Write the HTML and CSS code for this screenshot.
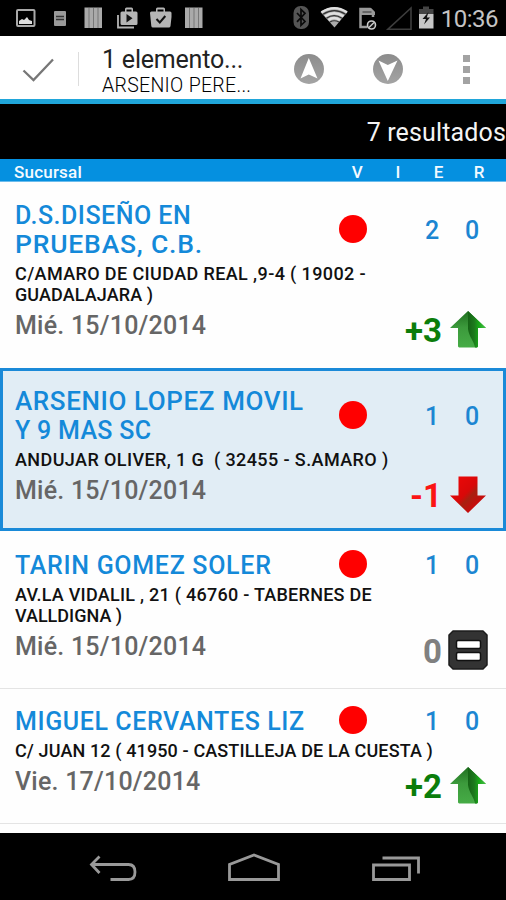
FILE: index.html
```html
<!DOCTYPE html>
<html lang="es">
<head>
<meta charset="utf-8">
<title>Sucursales</title>
<link rel="stylesheet" href="styles.css">
</head>
<body>
<svg class="defs" width="0" height="0" aria-hidden="true">
  <defs>
    <linearGradient id="gl" x1="0" y1="0" x2="0" y2="1"><stop offset="0" stop-color="#1f6f1f"/><stop offset=".45" stop-color="#3c9a3c"/><stop offset="1" stop-color="#46ac46"/></linearGradient>
    <linearGradient id="gr" x1="0" y1="0" x2="1" y2="0"><stop offset="0" stop-color="#156315"/><stop offset=".35" stop-color="#1c7a1c"/><stop offset=".6" stop-color="#18a818"/><stop offset="1" stop-color="#4cc04c"/></linearGradient>
    <linearGradient id="rd" x1="0" y1="0" x2="1" y2="1"><stop offset="0" stop-color="#f00808"/><stop offset=".45" stop-color="#d80808"/><stop offset=".56" stop-color="#a82010"/><stop offset=".75" stop-color="#c80c0c"/><stop offset="1" stop-color="#e00"/></linearGradient>
    <linearGradient id="gy" x1="0" y1="0" x2="0" y2="1"><stop offset="0" stop-color="#8c8c8c"/><stop offset="1" stop-color="#a4a4a4"/></linearGradient>
    <symbol id="arrow-up" viewBox="0 0 36 37"><path fill="url(#gl)" d="M18 0 L36 17 H28 V35.500 L27 36.500 H9 L8 35.500 V17 H0 Z"/><path fill="url(#gr)" d="M18 0 L36 17 H28 V35.500 L27 36.500 H25 C24 30 19 26 18 18 Z"/></symbol>
    <symbol id="arrow-down" viewBox="0 0 36 37"><path fill="url(#rd)" d="M8.500 .5h19v19H36L18 37 0 19.500h8.500z"/></symbol>
  </defs>
</svg>
<div class="status">
  <svg width="506" height="35" viewBox="0 0 506 35">
    <g fill="none" stroke="#a9a9a9" stroke-width="2"><rect x="17" y="10" width="17.500" height="16" rx="1"/></g>
    <path fill="#ddd" d="M19 24v-3l3-2 2 1 3-3 2 3 3 1v3z"/>
    <rect x="54" y="11" width="12" height="15" rx="1" fill="#999"/><path stroke="#333" stroke-width="1.300" d="M56 16.500h8M56 19.500h8"/>
    <g id="bars"><rect x="84.500" y="7.500" width="17.500" height="20.500" fill="#aaa"/><path stroke="#777" stroke-width="1" d="M89 8v20M93.500 8v20M98 8v20"/></g>
    <use href="#bars" x="100.500"/>
    <path fill="none" stroke="#b5b5b5" stroke-width="1.800" d="M118 15v12.500h16"/>
    <path fill="#b5b5b5" d="M120.500 13q0-1.500 1.500-1.500h3V9q0-1.500 1.500-1.500h5Q133 7.500 133 9v2.500h3q1.500 0 1.500 1.500v10.500q0 1.500-1.500 1.500h-14q-1.500 0-1.500-1.500z"/><path d="M126.500 9.500h5v2h-5z"/><path fill="#111" d="M126.500 14v8.500l6-4.200z"/>
    <path fill="#b5b5b5" d="M150 13q0-1.500 1.500-1.500h4.500V9q0-1.500 1.500-1.500h6Q165 7.500 165 9v2.500h5q1.500 0 1.500 1.500v4l-1 9q-.2 1.500-1.700 1.500H153q-1.500 0-1.700-1.500z"/><path d="M157.500 9.500h6v2h-6z"/><path fill="none" stroke="#111" stroke-width="2" d="m156.500 19 3.300 3.500 5.500-6.500"/>
    <rect x="293.500" y="6" width="15.500" height="23" rx="7" fill="#555"/><path fill="none" stroke="#0a0a0a" stroke-width="1.700" d="m297 13 8 8.500-4 3.800V9.500l4 3.800-8 8.500"/>
    <path fill="#aaa" d="M320.500 12q13.500-9.500 27 0L334.500 27.500z"/>
    <g fill="none" stroke="#e0e0e0" stroke-width="2.400"><path d="M321.500 12.300q13-8.300 25.500 0"/><path d="M325 16.300q9-6 18.500 0"/><path d="M328.500 20q5.500-4 11.500 0"/></g>
    <g fill="none" stroke="#333" stroke-width="1.200"><path d="M323 14.300q11.500-7.300 22.500 0"/><path d="M326.500 18.200q7.500-5 15.500 0"/><path d="M330 22q4-2.500 9 0"/></g>
    <path fill="none" stroke="#9a9a9a" stroke-width="2.500" d="M373 17v-5l-3-3h-9.500v18h7"/><path fill="#999" d="M360 8h11l4 4v3h-15z"/><path stroke="#333" d="M362.500 12h9"/>
    <circle cx="371.500" cy="25" r="4" fill="#111" stroke="#ccc" stroke-width="1.600"/><path stroke="#ccc" stroke-width="1.500" d="m369 27.500 5-5"/>
    <path fill="none" stroke="#3d3d3d" stroke-width="1.600" d="M388 29.200 411 8v21.200z"/>
    <path fill="#444" d="M423 6.500h6V9h4.500v5H419V9h4z"/><path fill="#c6c6c6" d="M419 14h14.500v14.500H419z"/><path fill="#111" d="m428.500 12-6 7h3.500l-2 5.500 6-7h-3.200z"/>
  </svg>
  <span class="clock">10:36</span>
</div>
<header class="bar">
  <svg class="check" width="32" height="24" viewBox="0 0 32 24"><path fill="none" stroke="#777" stroke-width="2.300" d="M1.500 12.500 11.500 22 31 1.500"/></svg>
  <i class="sep"></i>
  <div class="heads"><div class="h1">1 elemento...</div><div class="h2">ARSENIO PERE...</div></div>
  <svg class="nav1" width="30" height="30" viewBox="0 0 30 30"><circle cx="15" cy="15" r="15" fill="url(#gy)"/><path fill="#fff" d="M14.800 4 23.500 24.500 14.800 20.500 6.500 24.500z"/></svg>
  <svg class="nav2" width="30" height="30" viewBox="0 0 30 30"><circle cx="15" cy="15" r="15" fill="url(#gy)"/><path fill="#fff" d="M14.800 27 5.500 6.500 14.800 11 24.500 6.500z"/></svg>
  <div class="more"><i></i><i></i><i></i></div>
</header>
<div class="results">7 resultados</div>
<div class="cols"><span class="c0">Sucursal</span><span>V</span><span>I</span><span>E</span><span>R</span></div>
<main>
  <section class="row r1">
    <div class="top"><div class="name"><span class="t1">D.S.DISEÑO EN</span><br><span class="t2">PRUEBAS, C.B.</span></div><i class="dot"></i><b class="n e">2</b><b class="n">0</b></div>
    <div class="addr"><span class="a1">C/AMARO DE CIUDAD REAL ,9-4 ( 19002 -</span><br><span class="a2">GUADALAJARA )</span></div>
    <div class="foot"><span class="date">Mié. 15/10/2014</span><b class="diff up">+3</b><svg class="ar" width="36" height="37"><use href="#arrow-up"/></svg></div>
  </section>
  <section class="row r2 sel">
    <div class="top"><div class="name"><span class="t3">ARSENIO LOPEZ MOVIL</span><br><span class="t4">Y 9 MAS SC</span></div><i class="dot"></i><b class="n e">1</b><b class="n">0</b></div>
    <div class="addr"><span class="a3">ANDUJAR OLIVER, 1 G&nbsp; ( 32455 - S.AMARO )</span></div>
    <div class="foot"><span class="date">Mié. 15/10/2014</span><b class="diff down">-1</b><svg class="ar" width="36" height="37"><use href="#arrow-down"/></svg></div>
  </section>
  <section class="row r3">
    <div class="top"><div class="name"><span class="t5">TARIN GOMEZ SOLER</span></div><i class="dot"></i><b class="n e">1</b><b class="n">0</b></div>
    <div class="addr"><span class="a4">AV.LA VIDALIL , 21 ( 46760 - TABERNES DE</span><br><span class="a5">VALLDIGNA )</span></div>
    <div class="foot"><span class="date">Mié. 15/10/2014</span><b class="diff eq">0</b><svg class="ar eqi" width="40" height="40" viewBox="0 0 40 40"><path fill="#333" stroke="#1c1c1c" stroke-width="1.500" d="M5 1h30l4 4v30l-4 4H5l-4-4V5z" stroke-linejoin="round"/><g fill="#fff" stroke="#111" stroke-width="1.500"><rect x="8.500" y="10.500" width="24" height="8" rx="1.500"/><rect x="8.500" y="22.500" width="24" height="8" rx="1.500"/></g></svg></div>
  </section>
  <section class="row r4">
    <div class="top"><div class="name"><span class="t6">MIGUEL CERVANTES LIZ</span></div><i class="dot"></i><b class="n e">1</b><b class="n">0</b></div>
    <div class="addr"><span class="a6">C/ JUAN 12 ( 41950 - CASTILLEJA DE LA CUESTA )</span></div>
    <div class="foot"><span class="date">Vie. 17/10/2014</span><b class="diff up">+2</b><svg class="ar" width="36" height="37"><use href="#arrow-up"/></svg></div>
  </section>
</main>
<footer class="navbar">
  <svg width="506" height="67" viewBox="0 0 506 67"><g fill="none" stroke="#999" stroke-width="2.800">
    <path d="M99.500 23.500 91.500 31.500l8 8.500M92 31.500h36.500q6.500 0 6.500 7.500t-6.500 7.500H110.500"/>
    <path d="M229.500 46.500v-15L254 22l24.500 9.500v15z"/>
    <path d="M373.500 32h36v14.500h-36zM382.500 25h36v15.500"/>
  </g></svg>
</footer>
</body>
</html>
```
FILE: styles.css
```css
* { box-sizing: border-box; }
body { margin: 0; width: 506px; height: 900px; overflow: hidden; display: flex; flex-direction: column; background: #fefefe; font-family: Roboto, "Noto Sans", sans-serif; color: #111; }
i { font-style: normal; }
.defs { position: absolute; }
.status { height: 36px; background: #000; position: relative; flex: none; }
.status svg { display: block; }
.clock { position: absolute; right: 8px; top: 5px; font-size: 24px; line-height: 28px; color: #c4c4c4; letter-spacing: -.5px; }
.bar { height: 68px; flex: none; background: #fff; border-bottom: 5px solid #20a6da; display: flex; align-items: center; }
.check { margin: 4px 0 0 22px; flex: none; }
.sep { width: 1px; height: 34px; margin: 3px 23px 0 24px; background: #ddd; }
.heads { width: 192px; white-space: nowrap; padding-top: 8px; }
.h1 { font-size: 25px; line-height: 28px; color: #222; letter-spacing: -.2px; }
.h2 { font-size: 19.500px; line-height: 24px; font-weight: 300; color: #000; letter-spacing: .3px; }
.nav1, .nav2 { flex: none; margin-top: 2px; }
.nav2 { margin-left: 49px; }
.more { margin: 3px 0 0 60px; display: flex; flex-direction: column; gap: 4px; }
.more i { width: 7px; height: 7px; background: #a3a3a3; }
.results { flex: none; height: 55px; background: #000; color: #f4f4f4; text-align: right; font-size: 25px; line-height: 57px; letter-spacing: .15px; }
.cols { flex: none; height: 23px; background: #0590e0; border-bottom: 1px solid #6cbcec; color: #f4faff; display: flex; font-size: 17px; line-height: 26px; font-weight: 500; }
.cols span { width: 40.600px; text-align: center; }
.cols .c0 { width: 337px; padding-left: 14px; text-align: left; letter-spacing: .2px; }
main { flex: 1; }
.row { border-bottom: 1px solid #e4e4e4; padding-left: 15px; }
.r1 { height: 186px; padding-top: 19px; border-bottom: 0; }
.r2 { height: 163px; }
.r3 { height: 158px; padding-top: 20px; }
.r4 { height: 135px; padding-top: 18px; }
.sel { border: 3px solid #1a8ad8; padding: 16px 0 0 12px; background: #e1edf5; }
.top { display: flex; align-items: center; white-space: nowrap; }
.name { width: 324px; font-size: 25px; line-height: 29px; font-weight: 500; color: #1489d9; }
.t1 { letter-spacing: .5px; }
.t2 { font-size: 26.500px; line-height: 20px; letter-spacing: .8px; }
.t3 { font-size: 26px; line-height: 20px; letter-spacing: .6px; }
.t4 { letter-spacing: .3px; }
.t5 { letter-spacing: .7px; }
.t6 { letter-spacing: .6px; }
.dot { width: 28px; height: 28px; border-radius: 50%; background: #f00; margin: -4px 58px -1px 0; flex: none; }
.n { width: 14px; font-size: 25px; line-height: 29px; font-weight: 500; color: #1c86d2; }
.e { margin-right: 26px; }
.addr { margin-top: 4px; font-size: 18px; line-height: 21px; font-weight: 500; white-space: nowrap; color: #111; }
.a1 { letter-spacing: .39px; }
.a2 { letter-spacing: .1px; }
.a3 { letter-spacing: .4px; }
.a4 { letter-spacing: .26px; }
.a6 { letter-spacing: .12px; }
.foot { display: flex; margin-top: 5px; height: 38px; }
.date { width: 296px; padding-top: 1px; font-size: 25px; line-height: 30px; font-weight: 500; letter-spacing: .22px; color: #666; white-space: nowrap; }
.diff { width: 131px; text-align: right; font-size: 33px; line-height: 41px; font-weight: 700; }
.up { color: #0b7d0b; }
.down { color: #fb1414; }
.eq { color: #808080; }
.ar { margin: 1px 0 0 8px; }
.eqi { margin: -1px 0 0 6px; }
.navbar { flex: none; height: 67px; background: #000; }
.navbar svg { display: block; }
```
